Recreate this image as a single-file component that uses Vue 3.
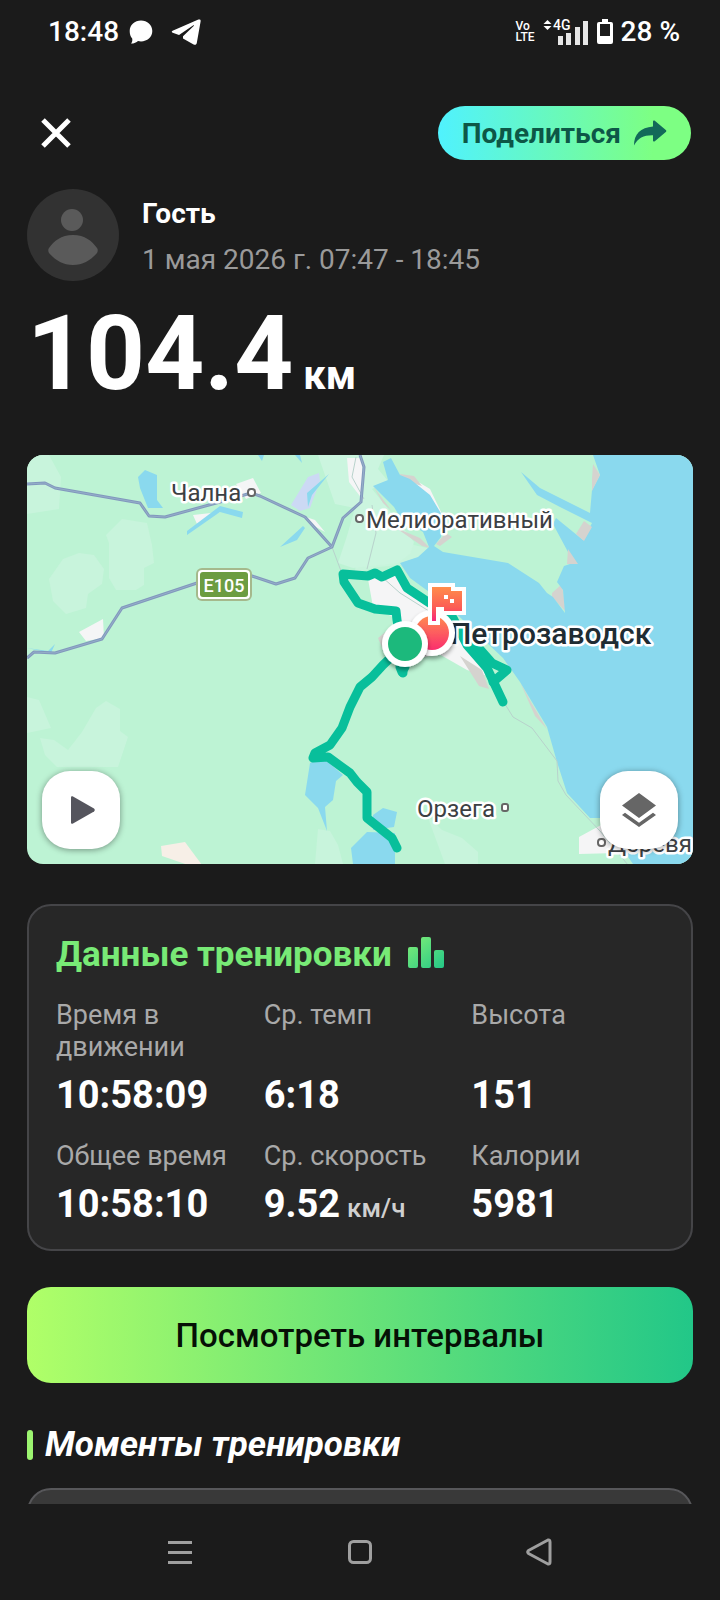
<template>
  <div class="screen">
    <!-- System status bar -->
    <div class="status-bar">
      <div class="status-group status-group--left">
        <span>18:48</span>
        <svg class="status-chat" width="24" height="24" viewBox="0 0 24 24" fill="#fff">
          <path d="M12 .5C18.2.5 23.3 5 23.3 11S18.2 21.4 12 21.4c-1 0-2-.1-3-.4-1.4 1.5-4 2.6-7 2.6 1.2-1.3 1.6-3 1.2-5C1.5 16.500.7 14 .7 11 .7 5 5.8.5 12 .5z"/>
        </svg>
        <svg width="30" height="26" viewBox="0 0 30 26" fill="#fff">
          <path d="M27.4.6 1.6 11.8c-1.2.6-1.1 1.6.1 2l6.3 2.1L22 6.400c.8-.5 1.3 0 .7.6L12 17.300v2.300l10.600 5.800c1.700.9 2.800.3 3.200-1.400L29.600 2.400C29.900.7 28.900 0 27.400.6z"/>
        </svg>
      </div>
      <div class="status-group status-group--right">
        <span class="volte"><span>Vo</span><span>LTE</span></span>
        <svg class="signal" width="46" height="28" viewBox="0 0 46 28">
          <path d="M4.500 2 8.500 6H.5zM.5 8h8l-4 4z" fill="#fff"/>
          <text class="signal-text" x="10" y="12">4G</text>
          <path d="M15 18h5v9h-5zM23 15h5v12h-5zM32 9h5v18h-5zM40 3h5v24h-5z" fill="#e6e6e6"/>
        </svg>
        <svg width="16" height="26" viewBox="0 0 16 26">
          <path fill="#fff" fill-rule="evenodd" d="M5 0h6v3h3q2 0 2 2v18q0 2-2 2H2q-2 0-2-2V5q0-2 2-2h3zM3 5v12h10V5z"/>
        </svg>
        <span>28 %</span>
      </div>
    </div>

    <main class="content">
      <header class="top-bar">
        <button class="close-btn" type="button" aria-label="Закрыть">
          <svg width="30" height="30" viewBox="0 0 30 30" fill="none" stroke="#fff" stroke-width="5">
            <path d="M2 2 28 28M28 2 2 28"/>
          </svg>
        </button>
        <button class="share-btn" type="button">
          Поделиться
          <svg width="34" height="26" viewBox="0 0 34 26" fill="#126a59">
            <path d="M20 1.500c0-1 1-1.400 1.800-.8l11 9.300c.7.600.7 1.400 0 2l-11 9.300c-.8.600-1.800.2-1.800-.8v-5.300C11 15 5 17.500 1 25.500 1 14 7.500 7.500 20 6.500z"/>
          </svg>
        </button>
      </header>

      <section class="profile">
        <svg class="avatar" viewBox="0 0 92 92">
          <circle cx="46" cy="46" r="46" fill="#323232"/>
          <circle cx="45" cy="31" r="11" fill="#5a5a5a"/>
          <path fill="#5a5a5a" d="M46 46c12 0 19 6 24 13 1 1 1 3 0 5-6 7-14 12-24 12s-18-5-24-12c-1-2-1-4 0-5 5-7 12-13 24-13z"/>
        </svg>
        <div class="profile-text">
          <span class="profile-name">Гость</span>
          <span class="profile-date">1 мая 2026 г. 07:47 - 18:45</span>
        </div>
      </section>

      <h1 class="distance">104.4<small>км</small></h1>

      <!-- Route map -->
      <section class="map">
        <svg class="map-canvas" viewBox="0 0 666 409">
          <defs>
            <linearGradient id="finish" x1="0" y1="0" x2="0" y2="1">
              <stop offset="0" stop-color="#ff8a50"/>
              <stop offset="1" stop-color="#fa2e6e"/>
            </linearGradient>
            <linearGradient id="flag" x1="0" y1="0" x2="0" y2="1">
              <stop offset="0" stop-color="#ff8d4a"/>
              <stop offset="0.6" stop-color="#fc5d55"/>
              <stop offset="1" stop-color="#f7267b"/>
            </linearGradient>
            <filter id="pin-shadow" x="-30%" y="-30%" width="160%" height="170%">
              <feDropShadow dx="0" dy="3" stdDeviation="2" flood-color="#000" flood-opacity="0.4"/>
            </filter>
          </defs>
          <rect width="666" height="409" fill="#bdf3d4"/>

          <!-- Lighter ground -->
          <g fill="#c8f4dc">
            <path d="M0 0h22l12 22-2 32-32 5zM52 98l15 2 10 14-2 15-14 10-2 14-20 6-13-13-4-22 14-20zM95 64l25 4 5 22 2 18-10 5v17l-8 5h-20l-7-12V88l-3-8z"/>
            <path d="M0 242l12 3 12 28-24 5zM13 283l14 2 14 10 14-18 14-24 10-7 14 8v22l8 6-10 30H30l-12-12zM291 374l12 2 8 14 5 19h-28zM400 360l15 15 20 8 16 14v12h-33z"/>
            <path d="M347 55l24 22 16 13 17 4-18 15-35 3-24 6z"/>
          </g>
          <path d="M291 0h66l-6 14 10 12-16 8 22 27 20 26-4 12-12 9-45 5-15-5 9-27 8-28-20-4z" fill="#cbf5df"/>

          <!-- Built-up areas -->
          <g fill="#f5f5f6">
            <path d="M320 3h15l1 42-14-18zM209 29l17-6 8 15-15 6zM166 60l27-3-23 12zM276 61l12 4 10 12-16-9zM52 177l24-13 1 19-18 3zM341 124l27-8 12 18 22 14 26 22 36 52-24-7-28-16-34 7-16-14 8-28-24-12z"/>
            <path d="M383 22l20 12 12 25 2 17-14-26zM552 382l22-12 26 16-10 12-38 1z"/>
          </g>
          <path d="M292 18l-11 4-17 28 9 6 10-3 10-27z" fill="#ccd9f4"/>
          <path d="M134 391l24-4 17 23-8 2-32-11z" fill="#f7efe7"/>
          <g fill="#d5d3cf">
            <path d="M525 138l10-9 4 28-14-15zM512 130l9 13-5 1zM373 19l14 2 8 10-20-6zM369 73l24 10 10 10-8-2zM409 89l10-11 6 4-12 9zM433 201l22 14 7 19-10-3zM493 227l11 20 16 27-12-13z"/>
            <path d="M346 31l18 24-8-7zM351 183l10-8 12 16-16 6z"/>
          </g>

          <!-- Water -->
          <g fill="#8ad9ee">
            <path d="M566 0 573 20 565 35 563 58 513 33 494 17 510 40 533 52 565 68 556 85 529 63 526 69 541 97 543 109 537 111 530 127 536 135 538 158 526 142 520 138 512 128 481 108 416 97 407 91 414 82 415 60 403 40 383 24 373 20 364 3 356 7 361 25 346 31 367 52 373 62 396 77 402 92 391 102 373 108 383 123 420 150 476 203 493 227 520 272 530 307 540 338 563 363 574 363 606 409H666V0z"/>
            <path d="M111 22 118 15 130 20 130 45 136 53H121L113 33zM160 80V76L193 51 216 57 215 63 193 57zM253 92 276 71 278 73 270 85zM302 19 280 38 281 52 285 40zM231 0h6l-2 6zM268 0h5l2 8zM0 193l21 3 7-7-4 9zM283 308q8-5 17-2l16 14-7 6-3 19-8 7 2 24-9-23-13-13zM368 409H326L324 393 340 377 368 378zM346 360 356 353 370 357 367 372 346 375z"/>
          </g>
          <path d="M566 9l7 11-8 16v-12zM549 79l8-13 8 6-8 14zM541 94l10 15h-11z" fill="#d5d3cf"/>

          <!-- Roads -->
          <g fill="none" stroke-linejoin="round">
            <g stroke="#b8d2cc" stroke-width="1">
              <path d="M305 92l12 32M345 50l4 28-9 36M355 122l18 16 32 20M478 249l8 13 19 11 25 33 1 20 8 14 34 36 28 34M329 2l-4 20 12 22"/>
            </g>
            <g stroke="#8298bd" stroke-width="3">
              <path d="M0 29 18 28 28 33 113 48 122 61 138 62 193 47 224 38 233 41 278 62 305 92"/>
              <path d="M0 203 7 197 28 198 75 184 95 153 170 128 225 121 249 129 268 123 281 103 305 92 316 63 334 47 337 12 333 0"/>
            </g>
            <g stroke="#94aec9" stroke-width="1">
              <path d="M0 29 18 28 28 33 113 48 122 61 138 62 193 47 224 38 233 41 278 62 305 92"/>
              <path d="M0 203 7 197 28 198 75 184 95 153 170 128 225 121 249 129 268 123 281 103 305 92 316 63 334 47 337 12 333 0"/>
            </g>
          </g>
          <rect x="169" y="113" width="56" height="33" rx="6" fill="#a5b98c"/>
          <rect x="171" y="115" width="52" height="29" rx="4" fill="#fff"/>
          <rect x="173" y="117" width="48" height="25" rx="3" fill="#6c9c41"/>
          <text class="road-label" x="197" y="137">E105</text>

          <!-- Track -->
          <g fill="none" stroke="#08bf9b" stroke-width="9" stroke-linejoin="round" stroke-linecap="round">
            <path d="M376 218 374 188 370 165 369 156 348 154 331 148 317 127 316 119 341 121 348 118 355 122 370 115 380 133 401 147 426 163 440 190 460 213 476 247"/>
            <path d="M440 184 450 191 465 208 480 215 466 227M373 212 375 217 378 212"/>
            <path d="M378 189 356 210 345 222 333 232 323 252 315 273 303 290 288 298 286 303 301 302 323 318 330 327 340 337V363L365 383 370 393"/>
          </g>

          <g class="place">
            <text x="144" y="46">Чална</text>
            <text x="339" y="73">Мелиоративный</text>
            <text x="390" y="362">Орзега</text>
            <text x="581" y="397">Деревя</text>
            <text class="place-city" x="423" y="189">Петрозаводск</text>
          </g>
          <g fill="#fff" stroke="#666" stroke-width="2">
            <rect x="221" y="34" width="7" height="7" rx="3"/>
            <rect x="329" y="60" width="7" height="7" rx="3"/>
            <rect x="475" y="349" width="6" height="7" rx="2"/>
            <rect x="571" y="384" width="7" height="7" rx="3"/>
          </g>

          <!-- Finish and start pins -->
          <g filter="url(#pin-shadow)">
            <circle cx="405" cy="178" r="23" fill="#fff"/>
            <circle cx="405" cy="178" r="17" fill="url(#finish)"/>
          </g>
          <path d="M405 132H424V136H435V156H417V152H409V166H405z" fill="#fff" stroke="#fff" stroke-width="8"/>
          <path d="M405 132H424V136H435V156H417V152H409V166H405z" fill="url(#flag)"/>
          <path d="M417 140h4v4h-4zM423 144h4v4h-4z" fill="#fff"/>
          <g filter="url(#pin-shadow)">
            <circle cx="378" cy="189" r="23" fill="#fff"/>
            <circle cx="378" cy="189" r="17" fill="#1fb97b"/>
          </g>
        </svg>
        <button class="map-btn map-btn--play" type="button" aria-label="Воспроизвести">
          <svg width="24" height="28" viewBox="0 0 24 28" fill="#55555d">
            <path d="M0 1.500C0 .3 1 0 2 .5l21 12c1 .7 1 2.300 0 3l-21 12C1 28 0 27.700 0 26.500z"/>
          </svg>
        </button>
        <button class="map-btn map-btn--layers" type="button" aria-label="Слои">
          <svg width="34" height="34" viewBox="0 0 34 34" fill="#666">
            <path d="M17 0 34 12.500 17 25 0 12.500zM0 22l3-2.200 14 10 14-10L34 22 17 34z"/>
          </svg>
        </button>
      </section>

      <!-- Workout data -->
      <section class="data-card">
        <h2 class="data-title">
          Данные тренировки
          <svg width="36" height="31" viewBox="0 0 36 31">
            <defs>
              <linearGradient id="bars" x1="0" y1="0" x2="1" y2="1">
                <stop offset="0" stop-color="#82ee76"/>
                <stop offset="1" stop-color="#24c888"/>
              </linearGradient>
            </defs>
            <path fill="url(#bars)" d="M2 10h6q2 0 2 2v17q0 2-2 2H2q-2 0-2-2V12q0-2 2-2zM15 0h6q2 0 2 2v27q0 2-2 2h-6q-2 0-2-2V2q0-2 2-2zM28 13h6q2 0 2 2v14q0 2-2 2h-6q-2 0-2-2V15q0-2 2-2z"/>
          </svg>
        </h2>
        <dl class="stats">
          <div v-for="stat in stats" :key="stat.label" class="stat">
            <dt class="stat-label">{{ stat.label }}</dt>
            <dd class="stat-value">{{ stat.value }}<small v-if="stat.unit">{{ stat.unit }}</small></dd>
          </div>
        </dl>
      </section>

      <button class="intervals-btn" type="button">Посмотреть интервалы</button>

      <h2 class="section-title">Моменты тренировки</h2>
      <div class="moments-card"></div>
    </main>

    <!-- System navigation -->
    <nav class="nav-bar">
      <button type="button" aria-label="Меню">
        <svg width="24" height="24" viewBox="0 0 24 24" fill="#9f9f9f">
          <path d="M0 1h24v3H0zM0 11h24v3H0zM0 21h24v3H0z"/>
        </svg>
      </button>
      <button type="button" aria-label="Домой">
        <svg width="24" height="24" viewBox="0 0 24 24" fill="none" stroke="#9f9f9f" stroke-width="3">
          <rect x="1.500" y="1.500" width="21" height="21" rx="4"/>
        </svg>
      </button>
      <button type="button" aria-label="Назад">
        <svg width="28" height="28" viewBox="0 0 28 28" fill="none" stroke="#9f9f9f" stroke-width="3" stroke-linejoin="round">
          <path d="M22 2 2.500 12.500q-1.500 1.500 0 3L22 26q2 .5 2-2V4q0-2.500-2-2z"/>
        </svg>
      </button>
    </nav>
  </div>
</template>

<script setup>
const stats = [
  { label: 'Время в движении', value: '10:58:09' },
  { label: 'Ср. темп', value: '6:18' },
  { label: 'Высота', value: '151' },
  { label: 'Общее время', value: '10:58:10' },
  { label: 'Ср. скорость', value: '9.52', unit: 'км/ч' },
  { label: 'Калории', value: '5981' }
]
</script>

<style>
body {
  background: #1b1b1b;
}
</style>

<style scoped>
.screen {
  display: flex;
  flex-direction: column;
  height: 100vh;
  background: #1b1b1b;
  color: #fff;
  font-family: Roboto, sans-serif;
}

button {
  display: flex;
  align-items: center;
  justify-content: center;
  padding: 0;
  border: none;
  background: none;
  color: inherit;
  font-family: inherit;
  cursor: pointer;
}

/* Status bar */
.status-bar {
  display: flex;
  flex-shrink: 0;
  justify-content: space-between;
  align-items: center;
  height: 64px;
  padding: 0 40px 0 48px;
  font-size: 28px;
  font-weight: 500;
  line-height: 32px;
}

.status-group {
  display: flex;
  align-items: center;
}
.status-group--left { gap: 18px; }
.status-group--right { gap: 8px; }

.status-chat {
  margin-left: -8px;
}

.volte {
  display: flex;
  flex-direction: column;
  font-size: 12px;
  font-weight: 500;
  line-height: 11px;
}

.signal-text {
  font-size: 14px;
  font-weight: 500;
  fill: #fff;
}

/* Content */
.content {
  display: flex;
  flex: 1;
  flex-direction: column;
  min-height: 0;
  padding: 42px 27px 0;
  overflow-y: auto;
  scrollbar-width: none;
}

.content > * {
  flex-shrink: 0;
}

.top-bar {
  display: flex;
  justify-content: space-between;
  align-items: center;
  padding-right: 2px;
}

.close-btn {
  width: 58px;
  height: 54px;
}

.share-btn {
  gap: 12px;
  height: 54px;
  padding: 0 24px;
  border-radius: 27px;
  background: linear-gradient(90deg, #50f2fe, #7dff83 85%);
  color: #0d5747;
  font-size: 28px;
  font-weight: 700;
}

.profile {
  display: flex;
  gap: 23px;
  margin-top: 29px;
}

.avatar {
  width: 92px;
  height: 92px;
}

.profile-text {
  display: flex;
  flex-direction: column;
  justify-content: space-between;
  padding: 8px 0 4px;
  font-size: 28px;
  line-height: 34px;
}

.profile-name {
  font-weight: 700;
}

.profile-date {
  color: #9a9a9a;
}

.distance {
  display: flex;
  align-items: baseline;
  gap: 10px;
  height: 104px;
  margin: 21px 0 49px;
  font-size: 103px;
  font-weight: 700;
  line-height: 104px;
}

.distance small {
  font-size: 40px;
  line-height: 48px;
}

/* Map */
.map {
  position: relative;
  border-radius: 16px;
  overflow: hidden;
}

.map-canvas {
  display: block;
  width: 100%;
}

.road-label {
  font-size: 18px;
  font-weight: 500;
  fill: #fff;
  text-anchor: middle;
}

.place text {
  font-size: 24px;
  fill: #3c4043;
  stroke: #fff;
  stroke-width: 5px;
  stroke-linejoin: round;
  paint-order: stroke;
}

.place .place-city {
  font-size: 30px;
  font-weight: 500;
  fill: #202c33;
}

.map-btn {
  position: absolute;
  bottom: 15px;
  width: 78px;
  height: 78px;
  border-radius: 28px;
  background: #fff;
  box-shadow: 0 1px 6px rgba(0, 0, 0, 0.4);
}
.map-btn--play {
  left: 15px;
  padding-left: 4px;
}
.map-btn--layers { right: 15px; }

/* Workout data */
.data-card {
  margin-top: 40px;
  padding: 29px 12px 22px 27px;
  border: 2px solid #454548;
  border-radius: 24px;
  background: #272727;
}

.data-title {
  display: flex;
  align-items: center;
  gap: 16px;
  margin: 0;
  color: #78ea76;
  font-size: 35px;
  font-weight: 700;
  line-height: 40px;
}

.data-title svg {
  margin-bottom: 6px;
}

.stats {
  display: grid;
  grid-template-columns: repeat(3, 1fr);
  gap: 22px 0;
  margin: 24px 0 0;
}

.stat {
  display: flex;
  flex-direction: column;
  justify-content: space-between;
  gap: 9px;
}

.stat-label {
  padding-right: 24px;
  color: #a9a9a9;
  font-size: 27px;
  line-height: 32px;
}

.stat-value {
  display: flex;
  align-items: baseline;
  gap: 7px;
  margin: 0;
  font-size: 38px;
  font-weight: 700;
  line-height: 46px;
}

.stat-value small {
  color: #d0d0d0;
  font-size: 26px;
  font-weight: 500;
  line-height: 32px;
}

.intervals-btn {
  height: 96px;
  margin-top: 36px;
  border-radius: 24px;
  background: linear-gradient(90deg, #b0ff68, #22c788);
  color: #061006;
  font-size: 33px;
  font-weight: 500;
}

.section-title {
  display: flex;
  align-items: center;
  gap: 12px;
  margin: 42px 0 23px;
  font-size: 35px;
  font-style: italic;
  font-weight: 700;
  line-height: 40px;
}

.section-title::before {
  content: '';
  width: 6px;
  height: 30px;
  border-radius: 3px;
  background: #9cf470;
}

.moments-card {
  height: 160px;
  border: 2px solid #57575a;
  border-radius: 24px;
  background: #393939;
}

/* Navigation bar */
.nav-bar {
  display: grid;
  flex-shrink: 0;
  grid-template-columns: repeat(3, 1fr);
  height: 96px;
  padding: 0 90px;
  background: #1b1b1b;
}
</style>
